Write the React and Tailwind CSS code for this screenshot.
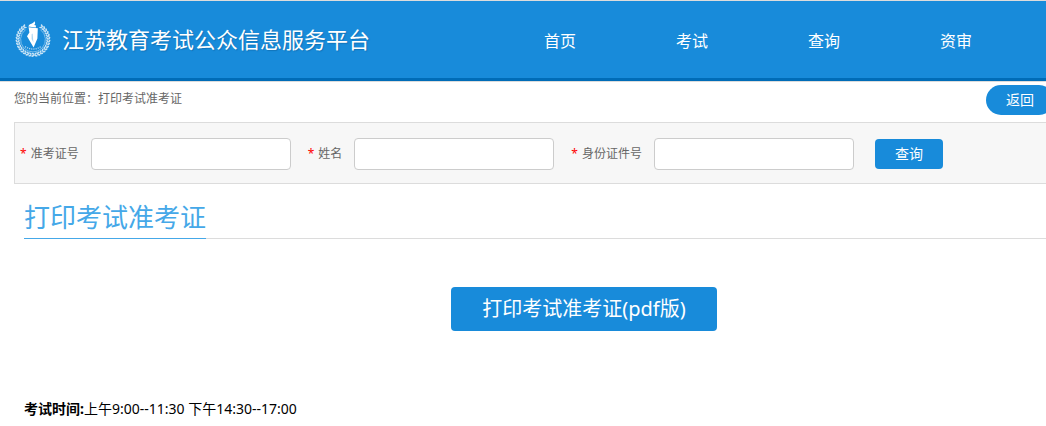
import React, { useState } from 'react'

const navItems = ['首页', '考试', '查询', '资审']

const fields = [
  { id: 'ticket', label: '准考证号' },
  { id: 'name', label: '姓名' },
  { id: 'idcard', label: '身份证件号' },
]

// angles of the wreath leaves, measured clockwise from the top
const leaves = Array.from({ length: 29 }, (_, i) => 33 + i * 10.5)

const Logo = () => (
  <svg viewBox="0 0 36 36" className="h-9 w-9 shrink-0" fill="#fff" aria-hidden="true">
    {leaves.map((angle) => (
      <g key={angle} transform={`rotate(${angle} 18 18.5)`} opacity="0.75">
        <ellipse cx="18" cy="2.2" rx="0.9" ry="1.7" transform={`rotate(${angle < 180 ? -60 : 60} 18 2.2)`} />
        <ellipse cx="18" cy="4.2" rx="0.8" ry="1.6" transform={`rotate(${angle < 180 ? -120 : 120} 18 4.2)`} />
      </g>
    ))}
    <path d="M10.5 8.7A12.4 12.4 0 1 0 25.5 8.7" fill="none" stroke="#fff" strokeWidth="0.7" opacity="0.6" />
    <path d="M10 25.6Q18 30.5 26 25.6" fill="none" stroke="#fff" strokeWidth="1.3" strokeDasharray="1.2 1" opacity="0.65" />
    {/* torch */}
    <path d="M13.6 5C14.6 2.4 18.4 3 19.4 0.3C20.6 2 20.2 3.2 19.2 4L21 4.4L20.8 6.6L13.2 5.6Z" />
    <path d="M13.6 6.2L22.8 7.2L22.4 17.5L18.6 26.6L12 15.2L14.4 11.4Z" />
    <path d="M17.6 12.5L18.4 21.5L16.6 18L16.6 13.2Z" fill="#188bda" opacity="0.35" />
  </svg>
)

const Header = () => (
  <header className="flex h-[82px] items-center border-t border-b border-[#dcdcdc] bg-[#188bda] shadow-[inset_0_-3px_0_#006cb7]">
    <a href="#" className="flex w-[494px] shrink-0 items-center gap-[11px] pb-1 pl-[15px]">
      <Logo />
      <span className="text-[22px] leading-8 whitespace-nowrap text-white [text-shadow:1px_1px_1px_#1274b9]">
        江苏教育考试公众信息服务平台
      </span>
    </a>
    <nav className="flex">
      {navItems.map((item) => (
        <a key={item} href="#" className="px-[50px] text-base whitespace-nowrap text-white">
          {item}
        </a>
      ))}
    </nav>
  </header>
)

const App = () => {
  const [values, setValues] = useState({})

  return (
    <div className="min-h-screen overflow-x-hidden bg-white font-['Noto_Sans','Noto_Sans_CJK_SC',sans-serif]">
      <Header />

      <main className="pl-3.5">
        <div className="flex h-10 items-start justify-between pt-[3px]">
          <p className="text-xs leading-7 text-[#666]">您的当前位置：打印考试准考证</p>
          <button type="button" className="-mr-2 h-[30px] shrink-0 rounded-full bg-[#188bda] px-5 text-sm text-white">
            返回
          </button>
        </div>

        {/* search bar */}
        <form
          onSubmit={(e) => e.preventDefault()}
          className="flex items-center gap-[17px] border-y border-l border-[#dcdcdc] bg-[#f7f7f7] pt-[15px] pb-[13px] pl-[5px]"
        >
          {fields.map(({ id, label }) => (
            <div key={id} className="flex items-center gap-3">
              <label htmlFor={id} className="flex gap-1 text-xs whitespace-nowrap text-[#666]">
                <span className="text-[#f00]">*</span>
                {label}
              </label>
              <input
                id={id}
                type="text"
                value={values[id] || ''}
                onChange={(e) => setValues({ ...values, [id]: e.target.value })}
                className="h-8 w-[200px] rounded border border-[#ccc] bg-white px-2 text-sm"
              />
            </div>
          ))}
          <button type="submit" className="ml-1 h-[30px] rounded bg-[#188bda] px-5 text-sm whitespace-nowrap text-white">
            查询
          </button>
        </form>

        <section className="pl-2.5">
          <div className="flex border-b border-[#dcdcdc] pt-3.5">
            <h1 className="-mb-px border-b border-[#45a8e8] pb-px text-[26px] leading-[39px] text-[#45a8e8]">
              打印考试准考证
            </h1>
          </div>

          <div className="flex justify-center pt-12 pl-[98px]">
            <button type="button" className="h-11 rounded bg-[#188bda] px-[31px] text-xl text-white">
              打印考试准考证(pdf版)
            </button>
          </div>

          <p className="pt-16 text-sm leading-7 text-black">
            <strong>考试时间:</strong>上午9:00--11:30 下午14:30--17:00
          </p>
        </section>
      </main>
    </div>
  )
}

export default App
